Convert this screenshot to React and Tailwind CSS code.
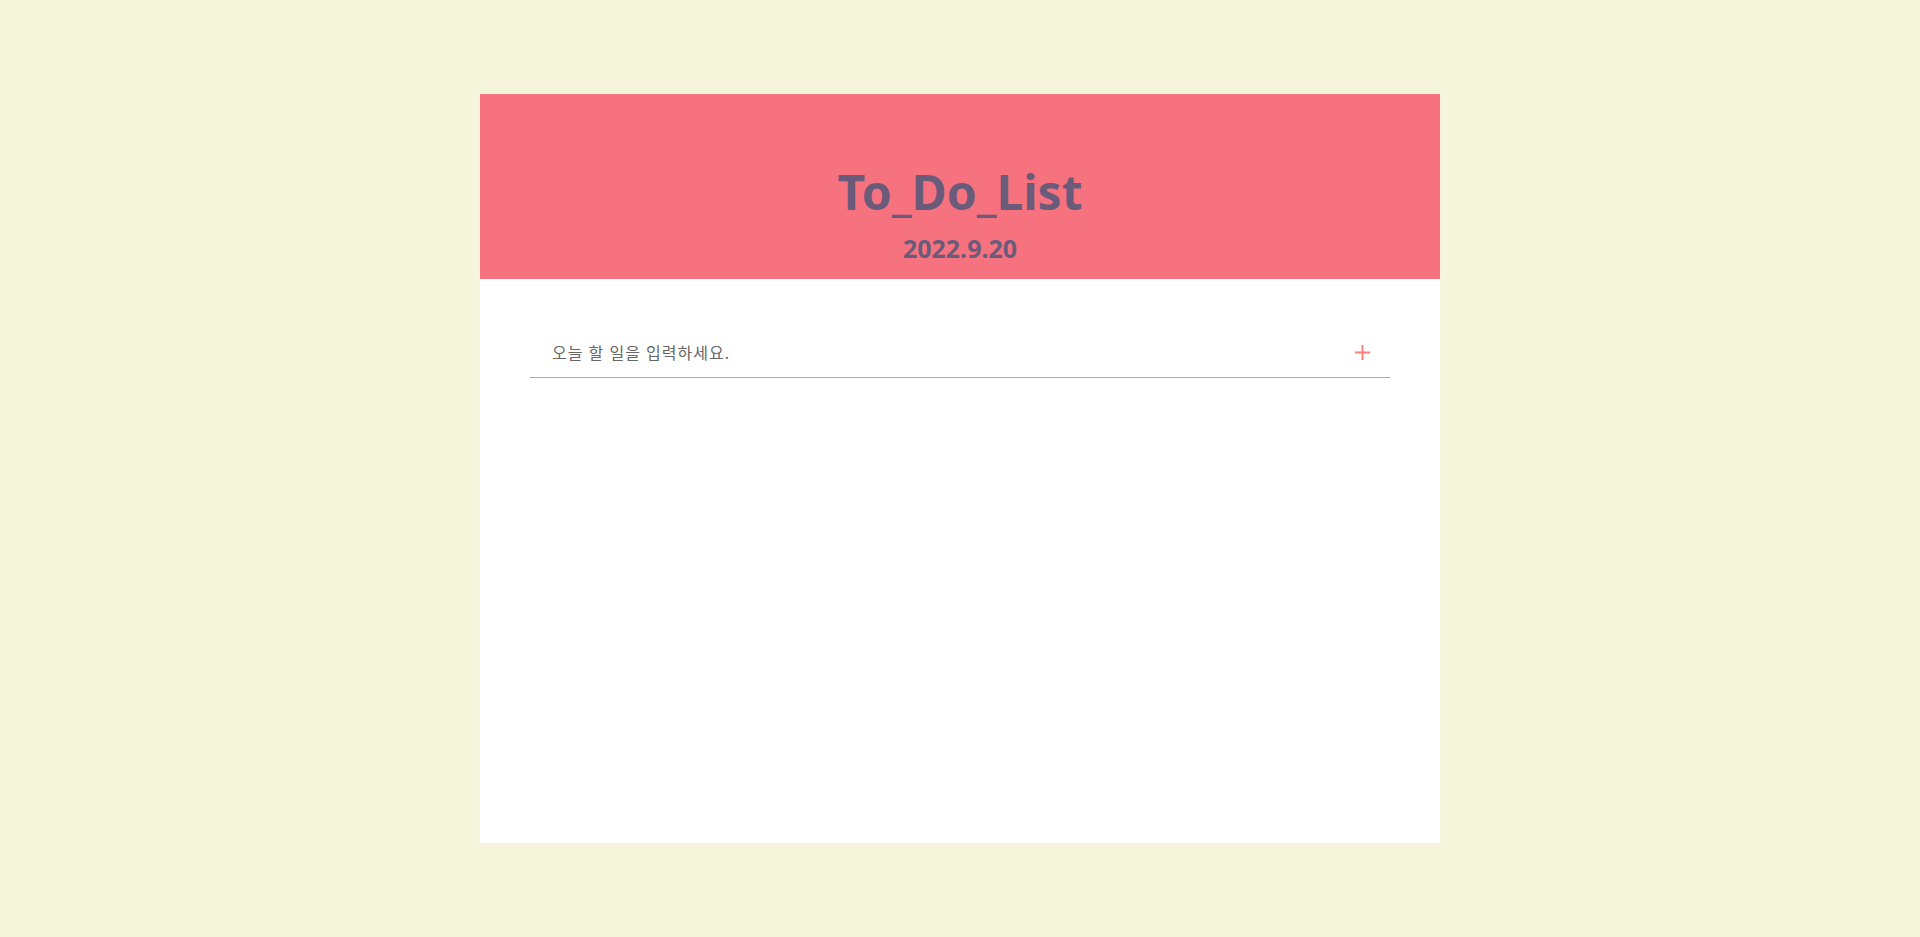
import { useState } from 'react';

export default function App() {
  const [text, setText] = useState('');

  return (
    <div className="min-h-screen w-full bg-[#f5f5dc] pt-[94px]" style={{ fontFamily: '"Noto Sans", "Noto Sans CJK KR", sans-serif' }}>
      <div className="mx-auto w-[960px] h-[749px] bg-white flex flex-col">
        {/* Header */}
        <div className="h-[185px] bg-[#f6727f] flex flex-col items-center pt-[68px]">
          <h1 className="text-[48px] leading-[60px] font-bold text-[#6b5b7b]">To_Do_List</h1>
          <p className="mt-[10px] text-[25px] leading-[32px] font-bold text-[#6b5b7b]">2022.9.20</p>
        </div>

        {/* Input */}
        <div className="px-[50px] pt-[49px]">
          <div className="flex items-center h-[50px] border-b border-[#ff8a80]">
            <input
              type="text"
              value={text}
              onChange={e => setText(e.target.value)}
              placeholder="오늘 할 일을 입력하세요."
              className="flex-1 h-full pl-[22px] text-[16px] tracking-[1px] text-[#555] placeholder:text-[#666] outline-none bg-transparent"
            />
            <button className="w-[56px] h-full flex items-center justify-center">
              <svg width="17" height="17" viewBox="0 0 17 17">
                <path d="M8.5 1 V16 M1 8.5 H16" stroke="#ff7f78" strokeWidth="2" />
              </svg>
            </button>
          </div>
        </div>
      </div>
    </div>
  );
}
